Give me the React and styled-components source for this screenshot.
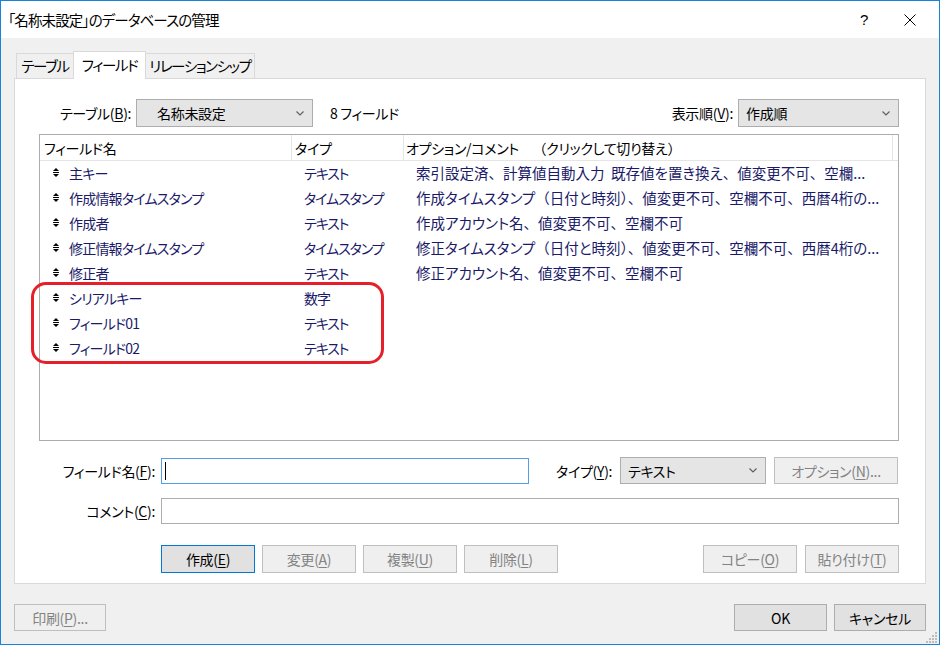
import React from 'react';
import styled, { createGlobalStyle, css } from 'styled-components';

const GlobalStyle = createGlobalStyle`
  html, body {
    margin: 0;
    padding: 0;
    background: #ffffff;
  }
  * {
    box-sizing: border-box;
  }
  body {
    font-family: 'Noto Sans CJK JP', 'Noto Sans', sans-serif;
    font-feature-settings: 'palt';
    font-size: 14px;
    letter-spacing: -0.3px;
    color: #000;
  }
`;

const FIELDS = [
  { name: '主キー', type: 'テキスト', opt: '索引設定済、計算値自動入力  既存値を置き換え、値変更不可、空欄...' },
  { name: '作成情報タイムスタンプ', type: 'タイムスタンプ', opt: '作成タイムスタンプ（日付と時刻）、値変更不可、空欄不可、西暦4桁の...' },
  { name: '作成者', type: 'テキスト', opt: '作成アカウント名、値変更不可、空欄不可' },
  { name: '修正情報タイムスタンプ', type: 'タイムスタンプ', opt: '修正タイムスタンプ（日付と時刻）、値変更不可、空欄不可、西暦4桁の...' },
  { name: '修正者', type: 'テキスト', opt: '修正アカウント名、値変更不可、空欄不可' },
  { name: 'シリアルキー', type: '数字', opt: '' },
  { name: 'フィールド01', type: 'テキスト', opt: '' },
  { name: 'フィールド02', type: 'テキスト', opt: '' },
];

const Window = styled.div`
  position: relative;
  width: 940px;
  height: 645px;
  border: 1px solid #1883d7;
  background: #f0f0f0;
  display: flex;
  flex-direction: column;
`;

const TitleBar = styled.div`
  height: 37px;
  background: #fff;
  display: flex;
  align-items: center;
  padding-left: 7px;
`;

const Title = styled.div`
  flex: 1;
  font-size: 14.5px;
  letter-spacing: -0.9px;
  padding-bottom: 1px;
`;

const TitleButton = styled.div`
  width: 46px;
  height: 37px;
  display: flex;
  align-items: center;
  justify-content: center;
  font-family: 'Liberation Sans', sans-serif;
  font-size: 15px;
  margin-right: ${(p) => p.$mr || 0}px;
`;

const Body = styled.div`
  flex: 1;
  display: flex;
  flex-direction: column;
  padding: 13px 13px 0 13px;
`;

const TabStrip = styled.div`
  display: flex;
  align-items: flex-end;
  height: 27px;
  padding-left: 2px;
  position: relative;
  z-index: 1;
`;

const Tab = styled.div`
  width: ${(p) => p.$w}px;
  height: 25px;
  border: 1px solid #d9d9d9;
  border-bottom: none;
  background: #f0f0f0;
  display: flex;
  align-items: center;
  justify-content: center;
  font-size: 14.5px;
  letter-spacing: -1.4px;
  padding-bottom: 1px;
  ${(p) =>
    p.$active &&
    css`
      height: 28px;
      background: #fff;
      margin: 0 -1px -1px;
      padding-bottom: 3px;
      position: relative;
      z-index: 2;
    `}
`;

const Panel = styled.div`
  height: 506px;
  background: #fff;
  border: 1px solid #d9d9d9;
  padding: 20px 26px 0 24px;
  display: flex;
  flex-direction: column;
`;

const TopRow = styled.div`
  display: flex;
  align-items: center;
  height: 28px;
  padding-left: 21px;
`;

const Label = styled.span`
  white-space: nowrap;
  ${(p) =>
    p.$w &&
    css`
      width: ${p.$w}px;
    `}
  ${(p) =>
    p.$right &&
    css`
      text-align: right;
    `}
`;

const Mn = styled.span`
  text-decoration: underline;
  text-underline-offset: 2px;
`;

const Select = styled.div`
  width: ${(p) => p.$w}px;
  height: ${(p) => p.$h || 28}px;
  flex: none;
  border: 1px solid #adadad;
  background: #e5e5e5;
  display: flex;
  align-items: center;
  padding: 0 8px 0 ${(p) => p.$pad || 7}px;
  justify-content: space-between;
`;

const Count = styled.span`
  margin-left: 17px;
  flex: 1;
`;

const ListBox = styled.div`
  position: relative;
  margin-top: 7px;
  height: 307px;
  border: 1px solid #acacac;
  background: #fff;
`;

const HeaderRow = styled.div`
  display: grid;
  grid-template-columns: 252px 112px 489px 1fr;
  height: 26px;
  border-bottom: 1px solid #e5e5e5;
`;

const HeaderCell = styled.div`
  display: flex;
  align-items: center;
  padding-left: ${(p) => p.$pad || 3}px;
  border-right: 1px solid #e5e5e5;
  white-space: pre;
`;

const Row = styled.div`
  display: grid;
  grid-template-columns: 252px 112px 1fr;
  height: 25px;
  padding-bottom: 2px;
  align-items: center;
  color: #1a1a68;
  white-space: pre;
`;

const NameCell = styled.div`
  display: flex;
  align-items: center;
  padding-left: 13px;
  gap: 10px;
  letter-spacing: -0.8px;
`;

const Cell = styled.div`
  padding-left: 12px;
  overflow: hidden;
  letter-spacing: -1.1px;
`;

const OptionCell = styled(Cell)`
  font-size: 14.5px;
  letter-spacing: 0;
`;

const Punct = styled.span`
  font-feature-settings: normal;
`;

const Highlight = styled.div`
  position: absolute;
  left: -9px;
  top: 147px;
  width: 353px;
  height: 82px;
  border: 3px solid #e5202a;
  border-radius: 15px;
  pointer-events: none;
`;

const FormRow = styled.div`
  display: flex;
  align-items: center;
  margin-top: ${(p) => p.$mt}px;
`;

const FormLabel = styled(Label)`
  width: 116px;
  text-align: right;
  margin-right: 6px;
`;

const Input = styled.div`
  height: 26px;
  width: ${(p) => (p.$w ? `${p.$w}px` : 'auto')};
  flex: ${(p) => (p.$w ? 'none' : 1)};
  border: 1px solid ${(p) => (p.$focus ? '#569de5' : '#adadad')};
  background: #fff;
  display: flex;
  align-items: center;
  padding-left: 3px;
`;

const Caret = styled.span`
  width: 1px;
  height: 18px;
  background: #000;
`;

const Button = styled.div`
  width: ${(p) => p.$w || 94}px;
  height: ${(p) => p.$h || 28}px;
  flex: none;
  display: flex;
  align-items: center;
  justify-content: center;
  border: 1px solid ${(p) => (p.$default ? '#0078d7' : p.$disabled ? '#bfbfbf' : '#adadad')};
  background: ${(p) => (p.$disabled ? '#efefef' : '#e1e1e1')};
  color: ${(p) => (p.$disabled ? '#838383' : '#000')};
  margin-left: ${(p) => p.$ml || 0}px;
  white-space: nowrap;
`;

const ButtonRow = styled.div`
  display: flex;
  align-items: center;
  margin-top: 21px;
  padding-left: 122px;
  gap: 7px;
`;

const Spacer = styled.div`
  flex: 1;
`;

const Footer = styled.div`
  display: flex;
  align-items: center;
  margin-top: 20px;
  gap: 7px;
`;

const Grip = styled.svg`
  position: absolute;
  right: 1px;
  bottom: 1px;
`;

// keep full-width punctuation at full width while kana stay proportional
const Wide = ({ text }) =>
  text.split(/([、（）　])/).map((part, i) =>
    /^[、（）　]$/.test(part) ? <Punct key={i}>{part}</Punct> : part
  );

const Bullet = () => (
  <svg width="6" height="9" viewBox="0 0 6 9">
    <path d="M3 0 L6 3 L0 3 Z" fill="#000" />
    <rect x="0" y="4" width="6" height="1" fill="#000" />
    <path d="M0 6 L6 6 L3 9 Z" fill="#000" />
  </svg>
);

const Chevron = () => (
  <svg width="8" height="5" viewBox="0 0 8 5">
    <path d="M0.5 0.5 L4 4 L7.5 0.5" fill="none" stroke="#606060" strokeWidth="1.2" />
  </svg>
);

const CloseIcon = () => (
  <svg width="12" height="12" viewBox="0 0 12 12">
    <path d="M0.5 0.5 L11.5 11.5 M11.5 0.5 L0.5 11.5" stroke="#000" strokeWidth="1" />
  </svg>
);

const GRIP_DOTS = [
  [9, 1], [9, 4], [6, 4], [9, 7], [6, 7], [3, 7], [9, 10], [6, 10], [3, 10], [0, 10],
];

const App = () => {
  return (
    <>
      <GlobalStyle />
      <Window>
        <TitleBar>
          <Title>「名称未設定」のデータベースの管理</Title>
          <TitleButton>?</TitleButton>
          <TitleButton $mr={6}>
            <CloseIcon />
          </TitleButton>
        </TitleBar>
        <Body>
          <TabStrip>
            <Tab $w={58}>テーブル</Tab>
            <Tab $w={73} $active>
              フィールド
            </Tab>
            <Tab $w={110}>リレーションシップ</Tab>
          </TabStrip>
          <Panel>
            <TopRow>
              <Label $w={76}>
                テーブル(<Mn>B</Mn>):
              </Label>
              <Select $w={177} $pad={20}>
                <span>名称未設定</span>
                <Chevron />
              </Select>
              <Count>8 フィールド</Count>
              <Label $w={71} $right>
                表示順(<Mn>V</Mn>):
              </Label>
              <Select $w={161} style={{ marginLeft: 5 }}>
                <span>作成順</span>
                <Chevron />
              </Select>
            </TopRow>
            <ListBox>
              <HeaderRow>
                <HeaderCell $pad={4}>フィールド名</HeaderCell>
                <HeaderCell>タイプ</HeaderCell>
                <HeaderCell $pad={2}>
                  <Wide text="オプション/コメント　（クリックして切り替え）" />
                </HeaderCell>
                <div />
              </HeaderRow>
              {FIELDS.map((f) => (
                <Row key={f.name}>
                  <NameCell>
                    <Bullet />
                    <span>{f.name}</span>
                  </NameCell>
                  <Cell>{f.type}</Cell>
                  <OptionCell>
                    <Wide text={f.opt} />
                  </OptionCell>
                </Row>
              ))}
              <Highlight />
            </ListBox>
            <FormRow $mt={16}>
              <FormLabel>
                フィールド名(<Mn>F</Mn>):
              </FormLabel>
              <Input $w={368} $focus>
                <Caret />
              </Input>
              <Label $w={64} style={{ marginLeft: 27 }}>
                タイプ(<Mn>Y</Mn>):
              </Label>
              <Select $w={146} $h={27}>
                <span>テキスト</span>
                <Chevron />
              </Select>
              <Button $w={124} $h={27} $ml={8} $disabled>
                オプション(<Mn>N</Mn>)...
              </Button>
            </FormRow>
            <FormRow $mt={14}>
              <FormLabel>
                コメント(<Mn>C</Mn>):
              </FormLabel>
              <Input />
            </FormRow>
            <ButtonRow>
              <Button $default>
                作成(<Mn>E</Mn>)
              </Button>
              <Button $disabled>
                変更(<Mn>A</Mn>)
              </Button>
              <Button $disabled>
                複製(<Mn>U</Mn>)
              </Button>
              <Button $disabled>
                削除(<Mn>L</Mn>)
              </Button>
              <Spacer />
              <Button $disabled>
                コピー(<Mn>O</Mn>)
              </Button>
              <Button $disabled $ml={1}>
                貼り付け(<Mn>T</Mn>)
              </Button>
            </ButtonRow>
          </Panel>
          <Footer>
            <Button $w={92} $h={27} $disabled>
              印刷(<Mn>P</Mn>)...
            </Button>
            <Spacer />
            <Button $w={93} $h={27}>
              OK
            </Button>
            <Button $w={92} $h={27}>
              キャンセル
            </Button>
          </Footer>
        </Body>
        <Grip width="12" height="12" viewBox="0 0 12 12">
          {GRIP_DOTS.map(([x, y]) => (
            <rect key={`${x}-${y}`} x={x} y={y} width="2" height="2" fill="#bdbdbd" />
          ))}
        </Grip>
      </Window>
    </>
  );
};

export default App;
